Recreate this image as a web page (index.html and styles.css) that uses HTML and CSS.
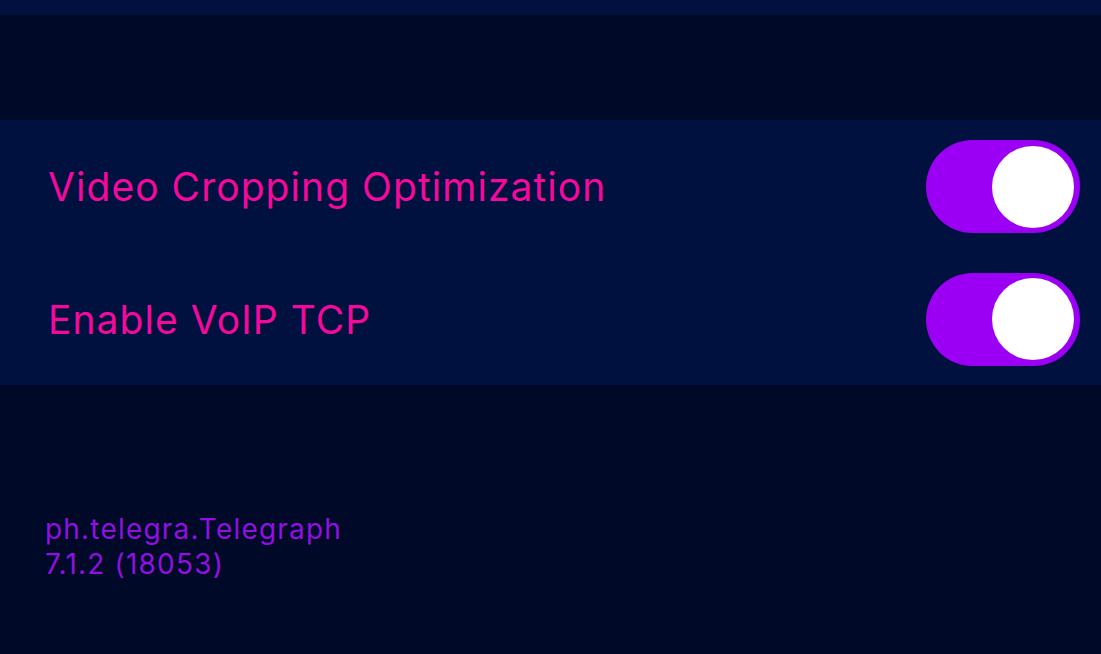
FILE: index.html
```html
<!DOCTYPE html>
<html>
<head>
<meta charset="utf-8">
<link rel="stylesheet" href="styles.css">
</head>
<body>
<div class="screen">
  <div class="top-band"></div>
  <div class="spacer"></div>
  <section class="group">
    <div class="row">
      <span class="label">Video Cropping Optimization</span>
      <div class="toggle on"><div class="knob"></div></div>
    </div>
    <div class="row">
      <span class="label">Enable VoIP TCP</span>
      <div class="toggle on"><div class="knob"></div></div>
    </div>
  </section>
  <footer class="footer">
    <div>ph.telegra.Telegraph</div>
    <div>7.1.2 (18053)</div>
  </footer>
</div>
</body>
</html>
```
FILE: styles.css
```css
html, body {
  margin: 0;
  padding: 0;
  background: #000a28;
}
.screen {
  width: 1101px;
  height: 654px;
  overflow: hidden;
  background: #000a28;
  font-family: Inter, "Noto Sans", sans-serif;
}
.top-band {
  height: 15px;
  background: #00113f;
}
.spacer {
  height: 105px;
}
.group {
  background: #00113f;
  height: 265px;
  display: flex;
  flex-direction: column;
}
.row {
  height: 132px;
  display: flex;
  align-items: center;
  justify-content: space-between;
  padding: 0 21px 0 48px;
}
.row:first-child {
  height: 133px;
}
.label {
  color: #f5089c;
  font-size: 39px;
  letter-spacing: 1.05px;
}
.toggle {
  width: 154px;
  height: 93px;
  border-radius: 47px;
  background: #9b00f5;
  display: flex;
  align-items: center;
  justify-content: flex-end;
  padding-right: 6px;
  box-sizing: border-box;
}
.knob {
  width: 82px;
  height: 82px;
  border-radius: 50%;
  background: #ffffff;
}
.footer {
  padding: 127px 0 0 45px;
  color: #9010e0;
  font-size: 28px;
  line-height: 35px;
  letter-spacing: 1.2px;
}
```
